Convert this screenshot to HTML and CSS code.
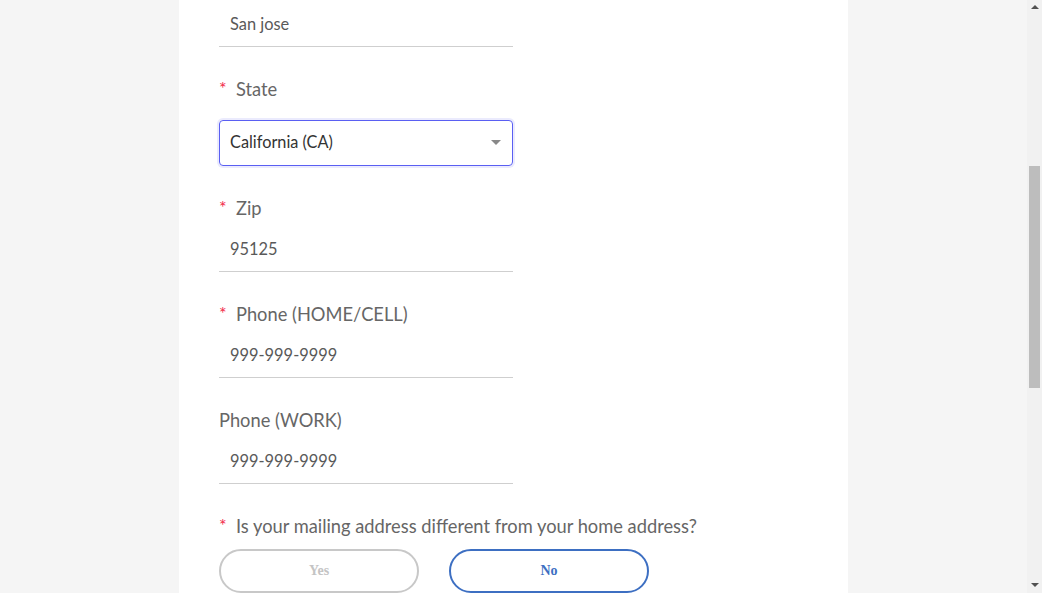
FILE: index.html
```html
<!DOCTYPE html>
<html lang="en">
<head>
<meta charset="utf-8">
<title>Address form</title>
<link rel="stylesheet" href="styles.css">
</head>
<body>
<div class="app">
  <main class="viewport">
    <div class="card">
      <div class="field first">
        <div class="input">San jose</div>
      </div>
      <div class="field">
        <div class="label"><span class="req">*</span>State</div>
        <div class="select">
          <span class="select-value">California (CA)</span>
          <span class="caret"></span>
        </div>
      </div>
      <div class="field">
        <div class="label"><span class="req">*</span>Zip</div>
        <div class="input">95125</div>
      </div>
      <div class="field">
        <div class="label"><span class="req">*</span>Phone (HOME/CELL)</div>
        <div class="input">999-999-9999</div>
      </div>
      <div class="field">
        <div class="label">Phone (WORK)</div>
        <div class="input">999-999-9999</div>
      </div>
      <div class="field">
        <div class="label"><span class="req">*</span>Is your mailing address different from your home address?</div>
        <div class="choices">
          <button class="choice off">Yes</button>
          <button class="choice on">No</button>
        </div>
      </div>
    </div>
  </main>
  <div class="scrollbar">
    <div class="arrow up"></div>
    <div class="track"><div class="thumb"></div></div>
    <div class="arrow down"></div>
  </div>
</div>
</body>
</html>
```
FILE: styles.css
```css
html, body {
  margin: 0;
  padding: 0;
  height: 100%;
  overflow: hidden;
}
body {
  background: #f5f5f5;
  font-family: Lato, "Open Sans", "Noto Sans", sans-serif;
}
.app {
  display: flex;
  height: 593px;
}
.viewport {
  flex: 1;
  overflow: hidden;
  display: flex;
  justify-content: center;
}
.card {
  width: 669px;
  box-sizing: border-box;
  background: #fff;
  padding: 2px 40px 0 40px;
  height: 593px;
}
.field {
  margin-top: 30px;
}
.field.first {
  margin-top: 0;
}
.label {
  height: 24px;
  line-height: 24px;
  font-size: 18.3px;
  color: #666;
  white-space: nowrap;
}
.req {
  color: #f2284b;
  font-size: 18px;
  margin-right: 10px;
  display: inline-block;
  width: 7px;
  position: relative;
  top: -1px;
}
.input {
  width: 294px;
  border-bottom: 1px solid #cfcfcf;
  padding: 0 11px;
  box-sizing: border-box;
  height: 45px;
  line-height: 44px;
  font-size: 16.4px;
  color: #595959;
  margin-top: 7px;
}
.field.first .input {
  margin-top: 0;
}
.select {
  margin-top: 19px;
  width: 294px;
  height: 46px;
  box-sizing: border-box;
  border: 1px solid #5a5ff2;
  border-radius: 4px;
  box-shadow: 0 0 0 2px #ebebfd;
  display: flex;
  align-items: center;
  justify-content: space-between;
  padding: 0 11px 0 10px;
  font-size: 16.3px;
  color: #333;
}
.select-value {
  margin-bottom: 3px;
}
.caret {
  width: 0;
  height: 0;
  border-left: 5px solid transparent;
  border-right: 5px solid transparent;
  border-top: 5px solid #888;
  margin-bottom: 1px;
}
.choices {
  margin-top: 11px;
  display: flex;
  gap: 30px;
}
.choice {
  width: 200px;
  height: 44px;
  border-radius: 22px;
  background: #fff;
  font-family: "Liberation Serif", serif;
  font-weight: bold;
  font-size: 14px;
  padding: 0;
}
.choice.off {
  border: 2px solid #c8c8c8;
  color: #c4c4c4;
}
.choice.on {
  border: 2px solid #3d6fc2;
  color: #3d6fc2;
}
.scrollbar {
  width: 15px;
  background: #f1f1f1;
  display: flex;
  flex-direction: column;
  align-items: center;
}
.arrow {
  width: 0;
  height: 0;
  border-left: 4px solid transparent;
  border-right: 4px solid transparent;
}
.arrow.up {
  margin-top: 5px;
  border-bottom: 4px solid #505050;
}
.arrow.down {
  margin-bottom: 6px;
  border-top: 4px solid #505050;
}
.track {
  flex: 1;
  width: 100%;
}
.thumb {
  margin: 157px auto 0;
  width: 11px;
  height: 222px;
  background: #bdbdbd;
}
```
